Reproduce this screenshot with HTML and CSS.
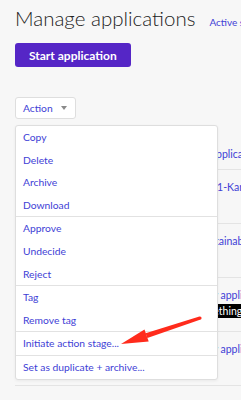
FILE: index.html
```html
<!DOCTYPE html>
<html lang="en">
<head>
    <meta charset="UTF-8">
    <meta name="viewport" content="width=device-width, initial-scale=1.0">
    <title>Manage applications</title>
    <link rel="stylesheet" href="styles.css">
</head>
<body>
    <div class="page">
        <div class="header">
            <h1>Manage applications</h1>
            <a class="tab-link" href="#">Active s</a>
        </div>
        <button class="start-btn">Start application</button>

        <div class="dropdown">
            <button class="action-btn">Action <span class="caret"></span></button>
            <ul class="menu">
                <li><a href="#">Copy</a></li>
                <li><a href="#">Delete</a></li>
                <li><a href="#">Archive</a></li>
                <li><a href="#">Download</a></li>
                <li class="divider"></li>
                <li><a href="#">Approve</a></li>
                <li><a href="#">Undecide</a></li>
                <li><a href="#">Reject</a></li>
                <li class="divider"></li>
                <li><a href="#">Tag</a></li>
                <li><a href="#">Remove tag</a></li>
                <li class="divider"></li>
                <li><a href="#">Initiate action stage...</a></li>
                <li class="divider"></li>
                <li><a href="#">Set as duplicate + archive...</a></li>
            </ul>
        </div>

        <table class="apps">
            <tbody>
                <tr class="first-row">
                    <td class="spacer"></td>
                    <td><a class="shift-xs" href="#">Applica</a></td>
                </tr>
                <tr>
                    <td class="spacer"></td>
                    <td><a href="#">21-Kar</a></td>
                </tr>
                <tr>
                    <td class="spacer"></td>
                    <td><a class="shift-lg" href="#">Sustainab</a></td>
                </tr>
                <tr>
                    <td class="spacer"></td>
                    <td><a class="shift-sm" href="#">My appli</a><br><span class="tag">Something</span></td>
                </tr>
                <tr>
                    <td class="spacer"></td>
                    <td><a class="shift-sm" href="#">My appli</a></td>
                </tr>
            </tbody>
        </table>
    </div>

    <svg class="arrow" width="241" height="400" viewBox="0 0 241 400">
        <polygon points="200.6,319.5 199.4,316.5 145.6,333.2 147.4,338" fill="#ff2b1c"/>
        <circle cx="200" cy="318" r="1.6" fill="#ff2b1c"/>
        <polygon points="121,344 144.5,329.6 148.7,341.6" fill="#ff2b1c"/>
    </svg>
</body>
</html>
```

FILE: styles.css
```css
body {
    margin: 0;
    background-color: #f7f7f7;
    font-family: Lato, "Liberation Sans", sans-serif;
    overflow: hidden;
    height: 400px;
}

a {
    color: #4141d6;
    text-decoration: none;
}

.page {
    padding: 6px 0 0 15px;
    width: 226px;
}

.header {
    display: flex;
    align-items: baseline;
    gap: 14px;
}

h1 {
    margin: 0;
    font-size: 20.5px;
    line-height: 24px;
    font-weight: 300;
    color: #222;
    white-space: nowrap;
}

.tab-link {
    font-size: 10px;
    white-space: nowrap;
}

.start-btn {
    display: block;
    margin-top: 13px;
    height: 24px;
    padding: 0 14px;
    border: none;
    border-radius: 3px;
    background-color: #5526c6;
    color: #fff;
    font-family: inherit;
    font-size: 12px;
    font-weight: 700;
}

/* Action dropdown */
.dropdown {
    position: relative;
    margin-top: 30px;
    width: 203px;
}

.action-btn {
    display: flex;
    align-items: center;
    gap: 8px;
    height: 22px;
    padding: 0 8px 0 7px;
    border: 1px solid #dedede;
    border-radius: 3px;
    background-color: #fff;
    color: #4141d6;
    font-family: inherit;
    font-size: 10.3px;
}

.caret {
    width: 0;
    height: 0;
    border-left: 3.5px solid transparent;
    border-right: 3.5px solid transparent;
    border-top: 4px solid #8a8a8a;
}

.menu {
    position: absolute;
    top: 28px;
    left: 0;
    z-index: 2;
    width: 201px;
    margin: 0;
    padding: 0;
    list-style: none;
    background-color: #fff;
    border: 1px solid #dedede;
    border-radius: 3px;
    box-shadow: 0 1px 3px rgba(0, 0, 0, 0.06);
}

.menu a {
    display: block;
    padding: 4px 7px;
    font-size: 10.3px;
    line-height: 14.6px;
    white-space: nowrap;
}

.menu .divider {
    height: 1px;
    background-color: #e2e2e2;
}

/* Table behind the menu */
.apps {
    border-collapse: collapse;
    margin-right: -20px;
}

.apps td {
    height: 54px;
    padding: 10px 0 0;
    vertical-align: top;
    border-bottom: 1px solid #e4e4e4;
    font-size: 10.5px;
    line-height: 14px;
    white-space: nowrap;
    box-sizing: border-box;
}

.apps .first-row td {
    height: 50px;
    padding-top: 28px;
}

.apps .spacer {
    width: 196px;
}

.apps .shift-xs {
    margin-left: -2px;
}

.apps .shift-lg {
    margin-left: -12px;
}

.apps .shift-sm {
    margin-left: -8px;
}

.tag {
    display: inline-block;
    margin-top: 2px;
    margin-left: -21px;
    padding: 0 3px;
    background-color: #000;
    color: #fff;
}

.arrow {
    position: absolute;
    top: 0;
    left: 0;
    z-index: 3;
}
```
